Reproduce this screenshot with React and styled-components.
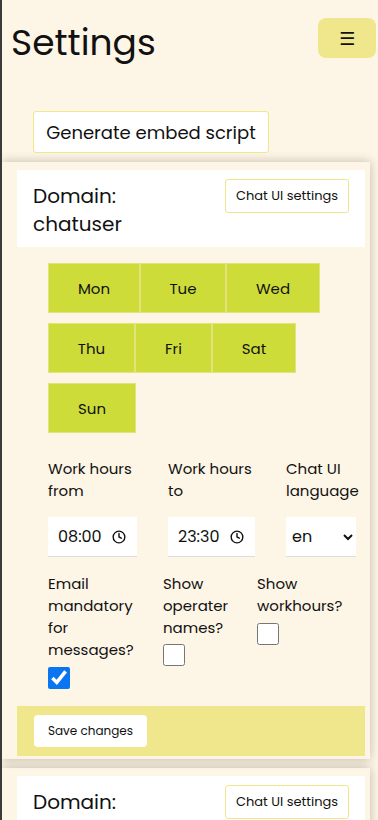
import styled, { createGlobalStyle } from 'styled-components';
import { Clock } from 'lucide-react';

const GlobalStyle = createGlobalStyle`
  body {
    margin: 0;
    background: #fdf5e6;
    font-family: 'Poppins', 'Open Sans', sans-serif;
    color: #111;
  }
`;

const Page = styled.div`
  min-height: 100vh;
  border-left: 2px solid #3b3b3b;
  overflow: hidden;
`;

const Header = styled.header`
  display: flex;
  justify-content: space-between;
  align-items: flex-start;
  padding: 18px 2px 0 9px;
`;

const Title = styled.h1`
  margin: 0;
  font-size: 36px;
  font-weight: 400;
  line-height: 50px;
`;

const MenuButton = styled.button`
  width: 58px;
  height: 40px;
  border: none;
  border-radius: 8px;
  background: #f0e68c;
  font-size: 18px;
  color: #111;
  font-family: 'DejaVu Sans', sans-serif;
`;

const EmbedRow = styled.div`
  padding: 43px 0 0 31px;
`;

const OutlineButton = styled.button`
  width: ${(p) => p.$w}px;
  height: ${(p) => p.$h}px;
  margin-top: ${(p) => p.$top || 0}px;
  background: #fff;
  border: 1px solid #f0e68c;
  border-radius: 3px;
  font-family: inherit;
  font-size: ${(p) => p.$size}px;
  color: #111;
  padding: 0;
  flex-shrink: 0;
`;

const Card = styled.section`
  margin: 9px 8px 5px 0;
  padding: 8px 5px 3px 15px;
  box-shadow: 0 0 10px rgba(60, 50, 30, 0.3);
`;

const DomainBar = styled.div`
  display: flex;
  justify-content: space-between;
  align-items: flex-start;
  background: #fff;
  padding: 12px 16px 9px 16px;
`;

const DomainName = styled.h2`
  margin: 0;
  font-size: 20px;
  font-weight: 400;
  line-height: 28px;
  width: 150px;
`;

const Body = styled.div`
  padding: 16px 0 0 31px;
  width: 308px;
`;

const Days = styled.div`
  display: flex;
  flex-wrap: wrap;
`;

const Day = styled.button`
  width: ${(p) => p.$w}px;
  height: 50px;
  margin-bottom: 10px;
  background: #cddc39;
  border: 1px solid #e4e27c;
  font-family: inherit;
  font-size: 15px;
  color: #111;
  padding: 0;
`;

const Fields = styled.div`
  display: grid;
  grid-template-columns: ${(p) => p.$cols};
  column-gap: ${(p) => p.$gap}px;
  margin-top: ${(p) => p.$top}px;
  align-items: start;
`;

const Field = styled.label`
  display: flex;
  flex-direction: column;
  align-items: flex-start;
  font-size: 15px;
  line-height: 22px;
`;

const LabelText = styled.span`
  max-width: ${(p) => p.$max || 200}px;
  margin-bottom: ${(p) => p.$gap}px;
`;

const TimeBox = styled.div`
  display: flex;
  align-items: center;
  justify-content: space-between;
  box-sizing: border-box;
  width: ${(p) => p.$w}px;
  height: 40px;
  padding: 0 11px 0 10px;
  background: #fff;
  border-bottom: 1px solid #ddd;
`;

const TimeInput = styled.input`
  width: 50px;
  border: none;
  outline: none;
  padding: 0;
  font-family: inherit;
  font-size: 16px;
  color: #111;
  background: transparent;
`;

const Select = styled.select`
  width: 70px;
  height: 40px;
  border: none;
  border-bottom: 1px solid #ddd;
  background: #fff;
  font-family: inherit;
  font-size: 16px;
  color: #111;
  padding: 0 0 0 2px;
`;

const Check = styled.input`
  width: 22px;
  height: 22px;
  margin: 0;
  accent-color: #0a75f0;
`;

const Footer = styled.div`
  display: flex;
  align-items: center;
  height: 50px;
  margin-top: 17px;
  padding-left: 17px;
  background: #f0e68c;
`;

const SaveButton = styled.button`
  width: 113px;
  height: 32px;
  border: none;
  border-radius: 4px;
  background: #fff;
  font-family: inherit;
  font-size: 12px;
  color: #111;
`;

const days = [
  { label: 'Mon', w: 92 },
  { label: 'Tue', w: 86 },
  { label: 'Wed', w: 94 },
  { label: 'Thu', w: 87 },
  { label: 'Fri', w: 77 },
  { label: 'Sat', w: 84 },
  { label: 'Sun', w: 88 },
];

function DomainCard({ name, full }) {
  return (
    <Card>
      <DomainBar>
        <DomainName>
          Domain:
          <br />
          {name}
        </DomainName>
        <OutlineButton $w={124} $h={34} $size={13} $top={-3}>
          Chat UI settings
        </OutlineButton>
      </DomainBar>
      {full && (
        <>
          <Body>
            <Days>
              {days.map((d) => (
                <Day key={d.label} $w={d.w}>
                  {d.label}
                </Day>
              ))}
            </Days>

            <Fields $cols="89px 87px 70px" $gap={31} $top={15}>
              <Field>
                <LabelText $gap={15}>Work hours from</LabelText>
                <TimeBox $w={89}>
                  <TimeInput readOnly value="08:00" />
                  <Clock size={14} strokeWidth={2.4} />
                </TimeBox>
              </Field>
              <Field>
                <LabelText $gap={15}>Work hours to</LabelText>
                <TimeBox $w={87}>
                  <TimeInput readOnly value="23:30" />
                  <Clock size={14} strokeWidth={2.4} />
                </TimeBox>
              </Field>
              <Field>
                <LabelText $gap={15}>Chat UI language</LabelText>
                <Select defaultValue="en">
                  <option value="en">en</option>
                  <option value="fi">fi</option>
                </Select>
              </Field>
            </Fields>

            <Fields $cols="115px 94px 100px" $gap={0} $top={16}>
              <Field>
                <LabelText $gap={6} $max={92}>
                  Email mandatory for messages?
                </LabelText>
                <Check type="checkbox" defaultChecked />
              </Field>
              <Field>
                <LabelText $gap={5} $max={82}>
                  Show operater names?
                </LabelText>
                <Check type="checkbox" />
              </Field>
              <Field>
                <LabelText $gap={6} $max={100}>
                  Show workhours?
                </LabelText>
                <Check type="checkbox" />
              </Field>
            </Fields>
          </Body>
          <Footer>
            <SaveButton>Save changes</SaveButton>
          </Footer>
        </>
      )}
    </Card>
  );
}

export default function App() {
  return (
    <Page>
      <GlobalStyle />
      <Header>
        <Title>Settings</Title>
        <MenuButton>☰</MenuButton>
      </Header>
      <EmbedRow>
        <OutlineButton $w={236} $h={42} $size={18}>
          Generate embed script
        </OutlineButton>
      </EmbedRow>
      <DomainCard name="chatuser" full />
      <DomainCard name="testdomain" full />
    </Page>
  );
}
